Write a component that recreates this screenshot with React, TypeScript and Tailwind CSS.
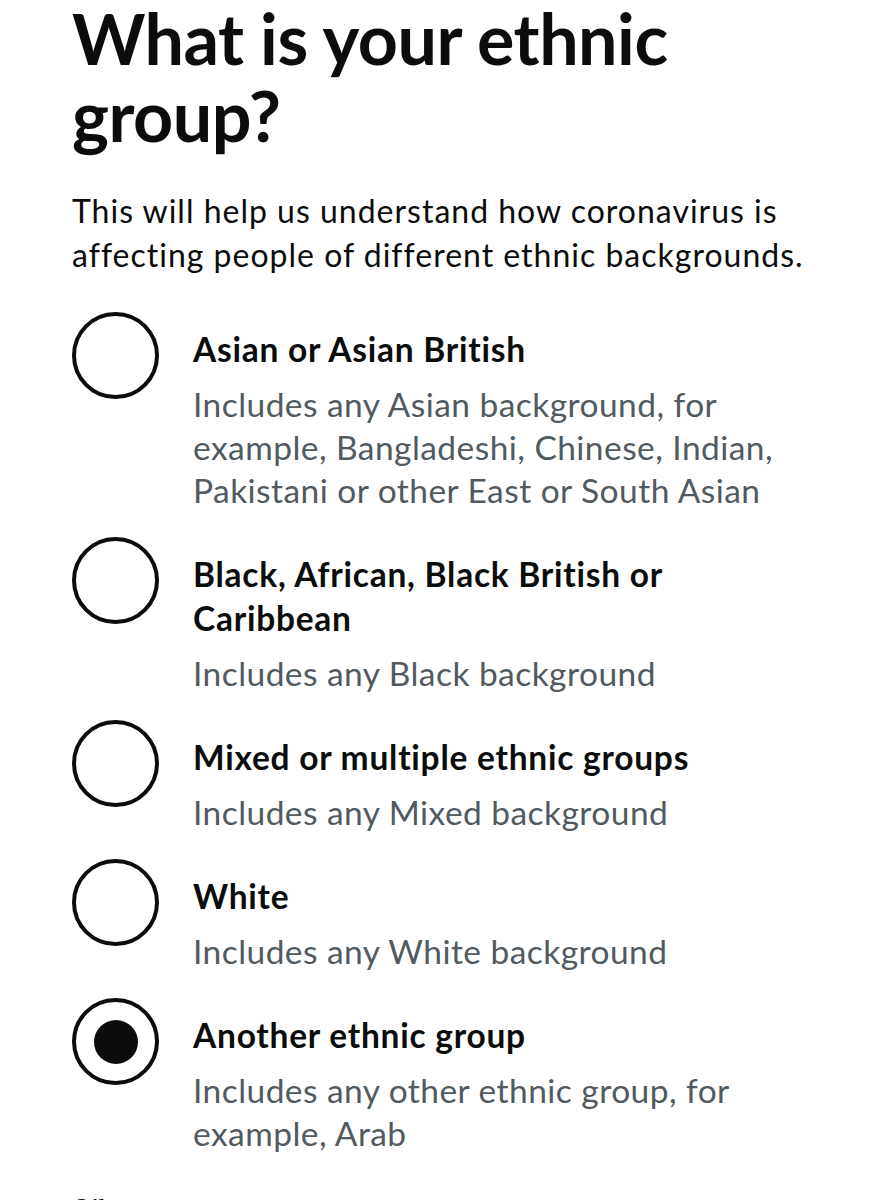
const options = [
  {
    label: 'Asian or Asian British',
    hint: 'Includes any Asian background, for example, Bangladeshi, Chinese, Indian, Pakistani or other East or South Asian',
  },
  {
    label: 'Black, African, Black British or Caribbean',
    hint: 'Includes any Black background',
  },
  {
    label: 'Mixed or multiple ethnic groups',
    hint: 'Includes any Mixed background',
  },
  {
    label: 'White',
    hint: 'Includes any White background',
  },
  {
    label: 'Another ethnic group',
    hint: 'Includes any other ethnic group, for example, Arab',
    checked: true,
  },
];

function Radio({ checked }: { checked?: boolean }) {
  return (
    <span className="flex h-[87px] w-[87px] shrink-0 items-center justify-center rounded-full border-[4px] border-[#0b0c0c] bg-white">
      {checked && <span className="h-[44px] w-[44px] rounded-full bg-[#0b0c0c]" />}
    </span>
  );
}

export default function App() {
  return (
    <div className="min-h-[1200px] overflow-hidden bg-white px-[72px] text-[#0b0c0c] [font-family:Lato,'Liberation_Sans',sans-serif]">
      <h1 className="text-[70px] font-bold leading-[77px] tracking-[-0.5px]">
        What is your ethnic group?
      </h1>
      <p className="mt-[35px] w-[790px] text-[32px] leading-[44px] tracking-[1px]">
        This will help us understand how coronavirus is affecting people of different ethnic backgrounds.
      </p>

      <div className="mt-[35px] flex flex-col gap-[25px]">
        {options.map((o) => (
          <label key={o.label} className="flex gap-[34px]">
            <Radio checked={o.checked} />
            <div className="w-[610px] pt-[15px]">
              <div className="text-[33.5px] font-bold leading-[44px] tracking-[0.75px]">{o.label}</div>
              <div className="mt-[12px] text-[33.5px] leading-[43px] tracking-[0.45px] text-[#505a5f]">
                {o.hint}
              </div>
            </div>
          </label>
        ))}
      </div>

      <p className="mt-[26px] text-[33.5px] leading-[44px] tracking-[0.45px]">or</p>
    </div>
  );
}
